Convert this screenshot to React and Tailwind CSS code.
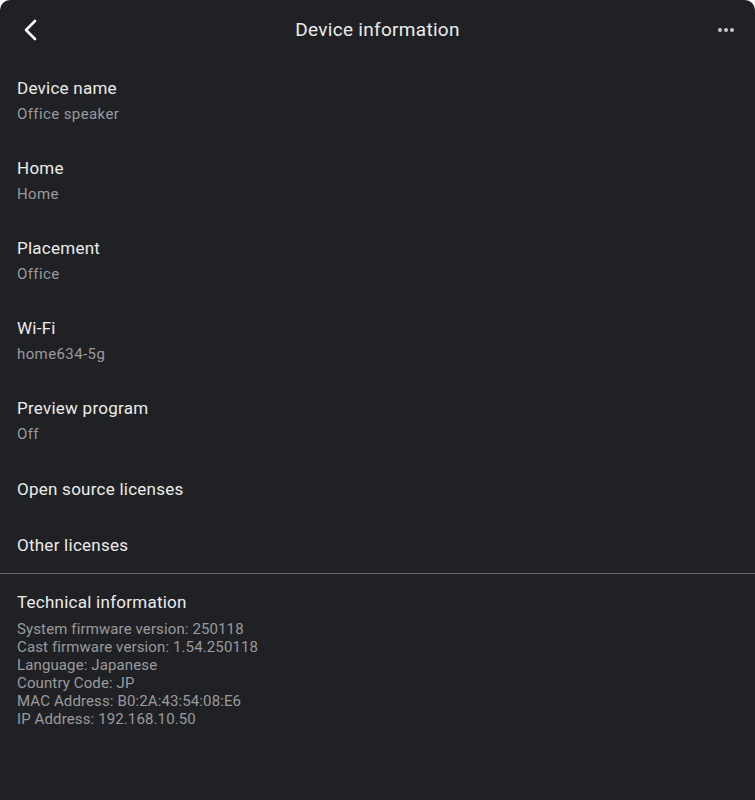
export default function App() {
  const items = [
    ["Device name", "Office speaker"],
    ["Home", "Home"],
    ["Placement", "Office"],
    ["Wi-Fi", "home634-5g"],
    ["Preview program", "Off"],
  ];
  const tech = [
    "System firmware version: 250118",
    "Cast firmware version: 1.54.250118",
    "Language: Japanese",
    "Country Code: JP",
    "MAC Address: B0:2A:43:54:08:E6",
    "IP Address: 192.168.10.50",
  ];
  return (
    <div className="w-[755px] h-[800px] bg-[#202124] overflow-hidden rounded-t-[10px]" style={{ fontFamily: "Roboto, 'Noto Sans', sans-serif" }}>
      <div className="h-[60px] flex items-center justify-between px-[18px] relative">
        <svg width="20" height="24" viewBox="0 0 20 24" className="ml-[2px]">
          <path d="M15 3 L6 12 L15 21" fill="none" stroke="#ffffff" strokeWidth="2.6" strokeLinecap="round" strokeLinejoin="round" />
        </svg>
        <div className="absolute left-0 right-0 text-center text-[19px] tracking-[0.3px] text-[#ececec] pointer-events-none">Device information</div>
        <div className="flex gap-[2px] mr-[3px]">
          <span className="w-[4px] h-[4px] rounded-full bg-[#c8c8c8]" />
          <span className="w-[4px] h-[4px] rounded-full bg-[#c8c8c8]" />
          <span className="w-[4px] h-[4px] rounded-full bg-[#c8c8c8]" />
        </div>
      </div>
      <div>
        {items.map(([a, b]) => (
          <div key={a} className="h-[80px] px-[17px] pt-[18px]">
            <div className="text-[17px] leading-[20px] tracking-[0.25px] text-[#ececec]">{a}</div>
            <div className="mt-[6px] text-[15px] leading-[20px] tracking-[0.4px] text-[#9a9a9e]">{b}</div>
          </div>
        ))}
        <div className="h-[56px] px-[17px] pt-[19px]">
          <div className="text-[17px] leading-[20px] tracking-[0.25px] text-[#ececec]">Open source licenses</div>
        </div>
        <div className="h-[57px] px-[17px] pt-[19px]">
          <div className="text-[17px] leading-[20px] tracking-[0.25px] text-[#ececec]">Other licenses</div>
        </div>
        <div className="h-px bg-[#6a6a6e]" />
        <div className="px-[17px] pt-[18px]">
          <div className="text-[17px] leading-[20px] tracking-[0.25px] text-[#ececec]">Technical information</div>
          <div className="mt-[8px]">
            {tech.map((t) => (
              <div key={t} className="text-[15px] leading-[18px] tracking-[0.12px] text-[#9a9a9e]">{t}</div>
            ))}
          </div>
        </div>
      </div>
    </div>
  );
}
